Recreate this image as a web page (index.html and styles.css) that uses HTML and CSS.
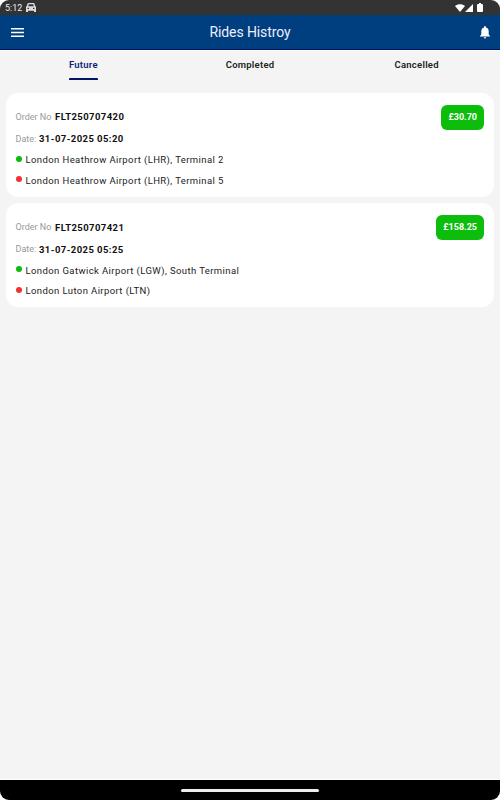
FILE: index.html
```html
<!DOCTYPE html>
<html lang="en">
<head>
  <meta charset="UTF-8">
  <meta name="viewport" content="width=device-width, initial-scale=1.0">
  <title>Rides Histroy</title>
  <link rel="stylesheet" href="styles.css">
</head>
<body>
  <div class="screen">
    <div class="status-bar">
      <span class="clock">5:12</span>
      <svg class="car" width="10" height="9" viewBox="0 0 10 9">
        <path fill="#ddd" fill-rule="evenodd" d="M2.5 0h5q.8 0 1 .8l.7 2.2.8.8V9H8V7.8H2V9H0V3.8L.8 3l.7-2.2Q1.7 0 2.5 0zM2.8 1.2L2.2 3.3h5.600L7.200 1.200zM1.500 4.800v1.300h1.500V4.800zM7 4.800v1.300h1.500V4.800z"/>
      </svg>
      <div class="status-icons">
        <svg width="10" height="8" viewBox="0 0 10 8"><path fill="#fff" d="M0 2.1C2.8-.4 7.2-.4 10 2.1L5 8z"/></svg>
        <svg width="8" height="8" viewBox="0 0 8 8"><path fill="#fff" d="M8 0v8H0z"/></svg>
        <svg class="battery" width="6" height="9" viewBox="0 0 6 9"><path fill="#fff" d="M2 0h2v1h1q1 0 1 1v6q0 1-1 1H1q-1 0-1-1V2q0-1 1-1h1z"/></svg>
      </div>
    </div>

    <header>
      <svg class="menu" width="13" height="9" viewBox="0 0 13 9"><path fill="#fff" d="M0 0h13v1.6H0zM0 3.7h13v1.6H0zM0 7.4h13V9H0z"/></svg>
      <h1>Rides Histroy</h1>
      <svg class="bell" width="10" height="13" viewBox="0 0 10 13"><path fill="#fff" d="M5 0q.9 0 .9 1v.5Q8.7 2.2 8.7 5.4v3.1L10 9.9v.7H0v-.7l1.3-1.4V5.4q0-3.2 2.8-3.9V1q0-1 .9-1zM3.8 11.3h2.4Q6.2 12.6 5 12.6t-1.2-1.3z"/></svg>
    </header>

    <nav>
      <a class="active" href="#">Future</a>
      <a href="#">Completed</a>
      <a href="#">Cancelled</a>
    </nav>

    <main>
      <section class="card">
        <div class="details">
          <p class="row"><span class="label">Order No</span><b class="order">FLT250707420</b></p>
          <p class="row"><span class="label date-label">Date:</span><b class="date">31-07-2025 05:20</b></p>
          <p class="place"><i class="dot"></i>London Heathrow Airport (LHR), Terminal 2</p>
          <p class="place"><i class="dot end"></i>London Heathrow Airport (LHR), Terminal 5</p>
        </div>
        <span class="price">£30.70</span>
      </section>

      <section class="card">
        <div class="details">
          <p class="row"><span class="label">Order No</span><b class="order">FLT250707421</b></p>
          <p class="row"><span class="label date-label">Date:</span><b class="date">31-07-2025 05:25</b></p>
          <p class="place"><i class="dot"></i>London Gatwick Airport (LGW), South Terminal</p>
          <p class="place"><i class="dot end"></i>London Luton Airport (LTN)</p>
        </div>
        <span class="price">£158.25</span>
      </section>
    </main>

    <footer><span class="handle"></span></footer>
  </div>
</body>
</html>
```
FILE: styles.css
```css
* {
  box-sizing: border-box;
}

body {
  margin: 0;
  background-color: #fff;
  font-family: Roboto, "Liberation Sans", sans-serif;
  color: #111;
}

.screen {
  display: flex;
  flex-direction: column;
  height: 800px;
  background-color: #f4f4f4;
  border-radius: 9px;
  overflow: hidden;
}

.status-bar {
  display: flex;
  align-items: center;
  height: 15px;
  padding: 0 17px 0 5px;
  background-color: #333;
}

.clock {
  width: 21px;
  color: #eee;
  font-size: 9px;
  line-height: 15px;
  padding-top: 1px;
}

.status-icons {
  display: flex;
  align-items: center;
  margin-left: auto;
}

.battery {
  margin-left: 4px;
}

header {
  display: flex;
  align-items: center;
  justify-content: space-between;
  height: 35px;
  padding: 0 10px 0 11px;
  background-color: #003f7f;
  border-bottom: 1px solid #00106b;
}

h1 {
  margin: 0 4px 0 0;
  color: #eef;
  font-size: 14px;
  font-weight: 400;
  letter-spacing: -0.1px;
}

nav {
  display: flex;
  height: 43px;
  border-top: 1px solid #fff;
}

nav a {
  flex: 1;
  display: flex;
  flex-direction: column;
  align-items: center;
  color: #222;
  font-size: 9.5px;
  font-weight: 600;
  letter-spacing: 0.25px;
  line-height: 27px;
  text-decoration: none;
}

nav .active {
  color: #0a1f7a;
}

nav .active::after {
  content: "";
  width: 29px;
  height: 2px;
  background-color: #001463;
  border-radius: 1px 1px 0 0;
}

main {
  flex: 1;
  padding: 0 6px;
}

.card {
  display: flex;
  justify-content: space-between;
  align-items: flex-start;
  height: 104px;
  margin-bottom: 6.4px;
  padding: 11.6px 10px 0 9.5px;
  background-color: #fff;
  border-radius: 12px;
}

.details {
  padding-top: 1.4px;
}

p {
  display: flex;
  align-items: center;
  margin: 0;
  white-space: nowrap;
}

.row {
  height: 22px;
}

.label {
  width: 39.5px;
  color: #999;
  font-size: 9px;
}

.date-label {
  width: 23.5px;
}

b {
  font-size: 9.5px;
  font-weight: 700;
  letter-spacing: 0.42px;
}

.place {
  height: 20.6px;
  margin-top: -0.5px;
  color: #222;
  font-size: 9.5px;
  letter-spacing: 0.4px;
}

.place + .place {
  margin-top: 0;
}

.dot {
  width: 6px;
  height: 6px;
  margin: -2px 4px 0 0;
  background-color: #0cbb0c;
  border-radius: 50%;
}

.dot.end {
  background-color: #f53030;
}

.price {
  padding: 0 7px;
  background-color: #0cbd0c;
  border-radius: 6px;
  color: #fff;
  font-size: 9px;
  font-weight: 700;
  line-height: 25px;
}

footer {
  display: flex;
  align-items: center;
  justify-content: center;
  height: 21px;
  background-color: #000;
  border-top: 1px solid #fff;
}

.handle {
  width: 138px;
  height: 3px;
  background-color: #eee;
  border-radius: 2px;
}
```
